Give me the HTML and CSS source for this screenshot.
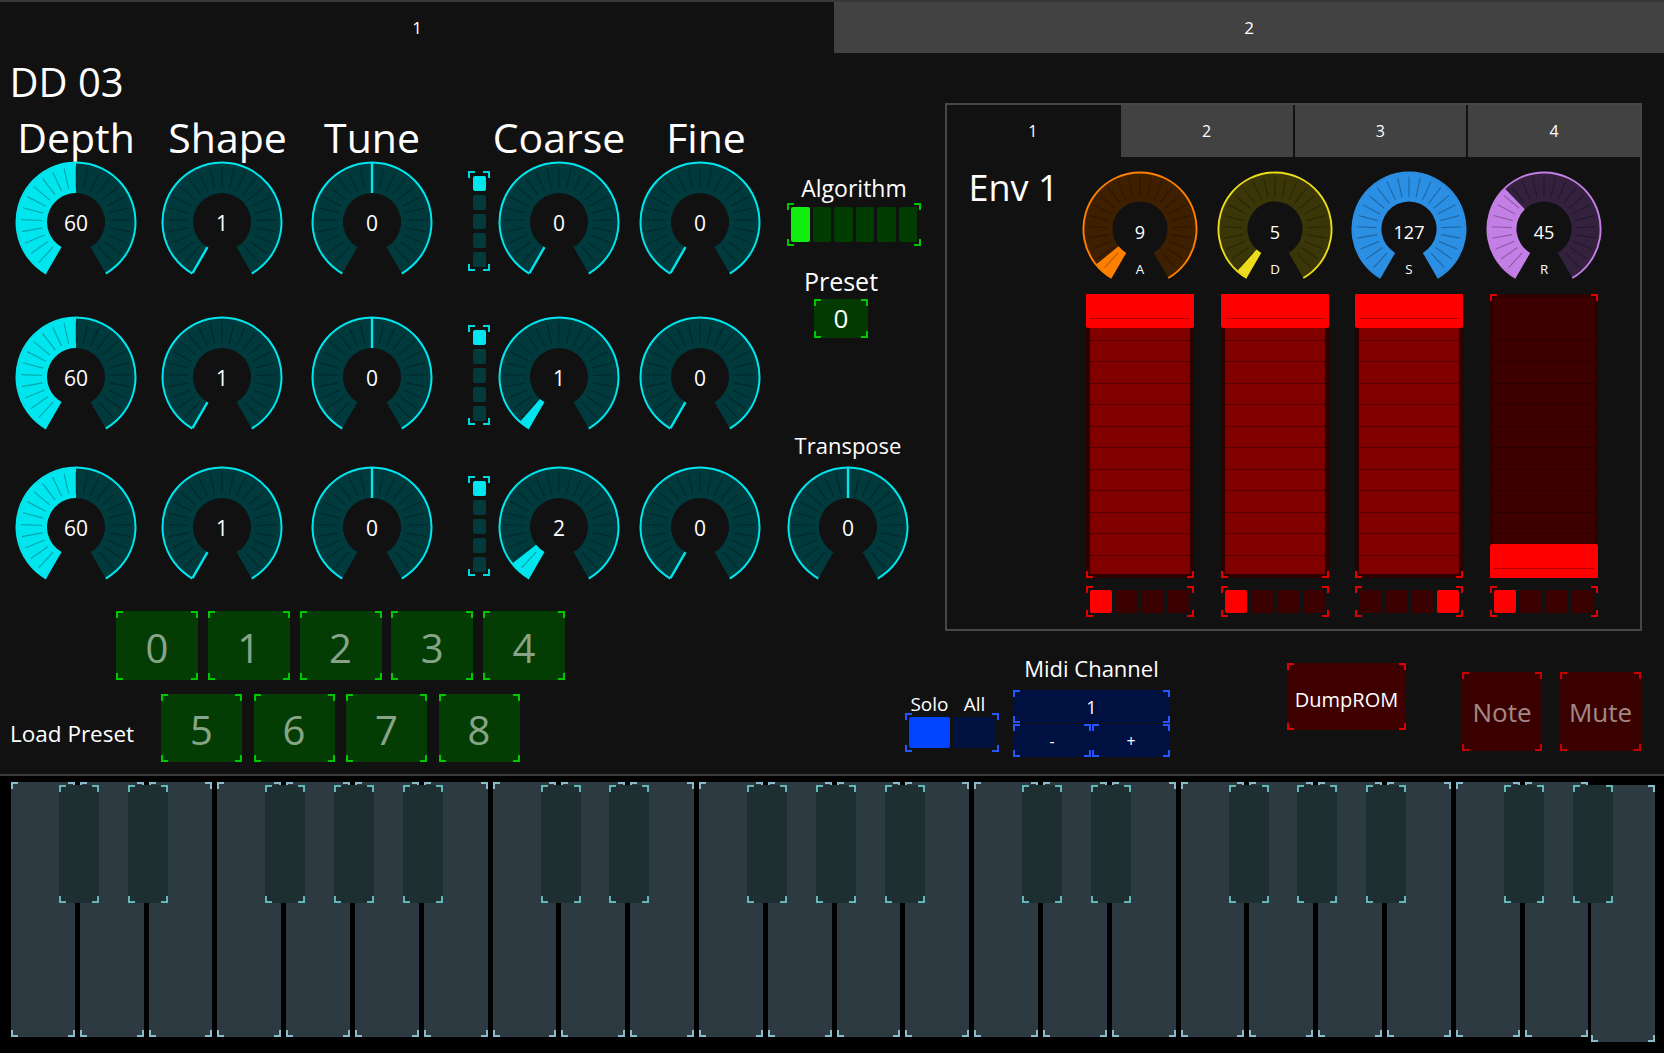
FILE: index.html
```html
<!DOCTYPE html>
<html>
<head>
<meta charset="utf-8">
<title>DD 03</title>
<link rel="stylesheet" href="styles.css">
</head>
<body>
<svg class="defs" aria-hidden="true">
  <defs>
    <path id="k-arc" d="M-29.5 51.1A59 59 0 1 1 29.5 51.1L14.5 25.11A29 29 0 1 0 -14.5 25.11Z"/>
    <path id="k-ring" fill="none" d="M-29.75 51.53A59.5 59.5 0 1 1 29.75 51.53"/>
    <path id="k-half" d="M-29.5 51.1A59 59 0 0 1 0 -59L0 -29A29 29 0 0 0 -14.5 25.11Z"/>
    <path id="k-w1" d="M-29.5 51.1A59 59 0 0 1 -38.71 44.53L-19.03 21.89A29 29 0 0 0 -14.5 25.11Z"/>
    <path id="k-w2" d="M-29.5 51.1A59 59 0 0 1 -46.49 36.33L-22.85 17.86A29 29 0 0 0 -14.5 25.11Z"/>
    <path id="k-wa" d="M-29.5 51.1A59 59 0 0 1 -45.85 37.13L-22.54 18.25A29 29 0 0 0 -14.5 25.11Z"/>
    <path id="k-wd" d="M-29.5 51.1A59 59 0 0 1 -39.48 43.84L-19.4 21.55A29 29 0 0 0 -14.5 25.11Z"/>
    <path id="k-wr" d="M-29.5 51.1A59 59 0 0 1 -40.99 -42.44L-20.15 -20.86A29 29 0 0 0 -14.5 25.11Z"/>
    <path id="k-min" d="M-14.5 25.11L-29.5 51.1"/>
    <path id="k-mid" d="M0 -29V-59"/>
    <path id="k-ticks" d="M0 -34V-55 M7.36 -33.19L11.9 -53.7 M-7.36 -33.19L-11.9 -53.7 M14.37 -30.81L23.24 -49.85 M-14.37 -30.81L-23.24 -49.85 M20.7 -26.97L33.48 -43.63 M-20.7 -26.97L-33.48 -43.63 M26.05 -21.85L42.13 -35.35 M-26.05 -21.85L-42.13 -35.35 M30.16 -15.7L48.79 -25.4 M-30.16 -15.7L-48.79 -25.4 M32.84 -8.8L53.13 -14.24 M-32.84 -8.8L-53.13 -14.24 M33.97 -1.48L54.95 -2.4 M-33.97 -1.48L-54.95 -2.4 M33.48 5.9L54.16 9.55 M-33.48 5.9L-54.16 9.55 M31.41 13.01L50.81 21.05 M-31.41 13.01L-50.81 21.05 M27.85 19.5L45.05 31.55 M-27.85 19.5L-45.05 31.55 M22.97 25.07L37.16 40.55 M-22.97 25.07L-37.16 40.55"/>
  </defs>
</svg>

<div class="tabs">
  <div class="tab">1</div>
  <div class="tab off">2</div>
</div>

<div class="page">
  <div class="left">
    <div class="title">DD 03</div>

    <div class="knobs">
      <div class="kcol">
        <div class="klabel">Depth</div>
        <svg class="knob m1" viewBox="-61 -61 122 122"><use href="#k-arc" class="kd"/><use href="#k-half" class="kc"/><use href="#k-ticks" class="kt"/><use href="#k-ring" class="kr"/><text class="kv" y="1">60</text></svg>
        <svg class="knob m2" viewBox="-61 -61 122 122"><use href="#k-arc" class="kd"/><use href="#k-half" class="kc"/><use href="#k-ticks" class="kt"/><use href="#k-ring" class="kr"/><text class="kv" y="1">60</text></svg>
        <svg class="knob m3" viewBox="-61 -61 122 122"><use href="#k-arc" class="kd"/><use href="#k-half" class="kc"/><use href="#k-ticks" class="kt"/><use href="#k-ring" class="kr"/><text class="kv" y="1">60</text></svg>
      </div>
      <div class="kcol c2">
        <div class="klabel sh">Shape</div>
        <svg class="knob m1" viewBox="-61 -61 122 122"><use href="#k-arc" class="kd"/><use href="#k-ticks" class="kt"/><use href="#k-ring" class="kr"/><use href="#k-min" class="kl"/><text class="kv" y="1">1</text></svg>
        <svg class="knob m2" viewBox="-61 -61 122 122"><use href="#k-arc" class="kd"/><use href="#k-ticks" class="kt"/><use href="#k-ring" class="kr"/><use href="#k-min" class="kl"/><text class="kv" y="1">1</text></svg>
        <svg class="knob m3" viewBox="-61 -61 122 122"><use href="#k-arc" class="kd"/><use href="#k-ticks" class="kt"/><use href="#k-ring" class="kr"/><use href="#k-min" class="kl"/><text class="kv" y="1">1</text></svg>
      </div>
      <div class="kcol c3">
        <div class="klabel">Tune</div>
        <svg class="knob m1" viewBox="-61 -61 122 122"><use href="#k-arc" class="kd"/><use href="#k-ticks" class="kt"/><use href="#k-ring" class="kr"/><use href="#k-mid" class="kl"/><text class="kv" y="1">0</text></svg>
        <svg class="knob m2" viewBox="-61 -61 122 122"><use href="#k-arc" class="kd"/><use href="#k-ticks" class="kt"/><use href="#k-ring" class="kr"/><use href="#k-mid" class="kl"/><text class="kv" y="1">0</text></svg>
        <svg class="knob m3" viewBox="-61 -61 122 122"><use href="#k-arc" class="kd"/><use href="#k-ticks" class="kt"/><use href="#k-ring" class="kr"/><use href="#k-mid" class="kl"/><text class="kv" y="1">0</text></svg>
      </div>
      <div class="swcol">
        <div class="vsw br bc-cyan"><i class="on"></i><i></i><i></i><i></i><i></i></div>
        <div class="vsw br bc-cyan s2"><i class="on"></i><i></i><i></i><i></i><i></i></div>
        <div class="vsw br bc-cyan s3"><i class="on"></i><i></i><i></i><i></i><i></i></div>
      </div>
      <div class="kcol c5">
        <div class="klabel">Coarse</div>
        <svg class="knob m1" viewBox="-61 -61 122 122"><use href="#k-arc" class="kd"/><use href="#k-ticks" class="kt"/><use href="#k-ring" class="kr"/><use href="#k-min" class="kl"/><text class="kv" y="1">0</text></svg>
        <svg class="knob m2" viewBox="-61 -61 122 122"><use href="#k-arc" class="kd"/><use href="#k-w1" class="kc"/><use href="#k-ticks" class="kt"/><use href="#k-ring" class="kr"/><text class="kv" y="1">1</text></svg>
        <svg class="knob m3" viewBox="-61 -61 122 122"><use href="#k-arc" class="kd"/><use href="#k-w2" class="kc"/><use href="#k-ticks" class="kt"/><use href="#k-ring" class="kr"/><text class="kv" y="1">2</text></svg>
      </div>
      <div class="kcol c6">
        <div class="klabel fi">Fine</div>
        <svg class="knob m1" viewBox="-61 -61 122 122"><use href="#k-arc" class="kd"/><use href="#k-ticks" class="kt"/><use href="#k-ring" class="kr"/><use href="#k-min" class="kl"/><text class="kv" y="1">0</text></svg>
        <svg class="knob m2" viewBox="-61 -61 122 122"><use href="#k-arc" class="kd"/><use href="#k-ticks" class="kt"/><use href="#k-ring" class="kr"/><use href="#k-min" class="kl"/><text class="kv" y="1">0</text></svg>
        <svg class="knob m3" viewBox="-61 -61 122 122"><use href="#k-arc" class="kd"/><use href="#k-ticks" class="kt"/><use href="#k-ring" class="kr"/><use href="#k-min" class="kl"/><text class="kv" y="1">0</text></svg>
      </div>
      <div class="rcol">
        <div class="alg-label">Algorithm</div>
        <div class="alg br bc-green"><i class="on"></i><i></i><i></i><i></i><i></i><i></i></div>
        <div class="preset">
          <div class="preset-label">Preset</div>
          <div class="preset-box br bc-green">0</div>
        </div>
        <div class="transpose">
          <div class="tr-label">Transpose</div>
          <svg class="knob tr-knob" viewBox="-61 -61 122 122"><use href="#k-arc" class="kd"/><use href="#k-ticks" class="kt"/><use href="#k-ring" class="kr"/><use href="#k-mid" class="kl"/><text class="kv" y="1">0</text></svg>
        </div>
      </div>
    </div>

    <div class="prow r1">
      <div class="pbtn br bc-green">0</div>
      <div class="pbtn br bc-green">1</div>
      <div class="pbtn br bc-green">2</div>
      <div class="pbtn br bc-green">3</div>
      <div class="pbtn br bc-green">4</div>
    </div>
    <div class="prow r2">
      <div class="lp">Load Preset</div>
      <div class="pbtn br bc-green">5</div>
      <div class="pbtn br bc-green">6</div>
      <div class="pbtn br bc-green">7</div>
      <div class="pbtn br bc-green">8</div>
    </div>
  </div>

  <div class="right">
    <div class="panel">
      <div class="ptabs">
        <div class="ptab on">1</div>
        <div class="ptab">2</div>
        <div class="ptab">3</div>
        <div class="ptab">4</div>
      </div>
      <div class="pbody">
        <div class="envl">Env 1</div>
        <div class="ecol">
          <svg class="eknob ea" viewBox="-61 -61 122 122"><use href="#k-arc" class="kd"/><use href="#k-wa" class="kc"/><use href="#k-ticks" class="kt"/><use href="#k-ring" class="kr"/><text class="ev" y="3">9</text><text class="el" y="42">A</text></svg>
          <div class="fader br bc-red"><div class="track"></div><div class="handle"></div></div>
          <div class="hsw br bc-red"><i class="on"></i><i></i><i></i><i></i></div>
        </div>
        <div class="ecol">
          <svg class="eknob ed" viewBox="-61 -61 122 122"><use href="#k-arc" class="kd"/><use href="#k-wd" class="kc"/><use href="#k-ticks" class="kt"/><use href="#k-ring" class="kr"/><text class="ev" y="3">5</text><text class="el" y="42">D</text></svg>
          <div class="fader br bc-red"><div class="track"></div><div class="handle"></div></div>
          <div class="hsw br bc-red"><i class="on"></i><i></i><i></i><i></i></div>
        </div>
        <div class="ecol">
          <svg class="eknob es" viewBox="-61 -61 122 122"><use href="#k-arc" class="kc"/><use href="#k-ticks" class="kt"/><use href="#k-ring" class="kr"/><text class="ev" y="3">127</text><text class="el" y="42">S</text></svg>
          <div class="fader br bc-red"><div class="track"></div><div class="handle"></div></div>
          <div class="hsw br bc-red"><i></i><i></i><i></i><i class="on"></i></div>
        </div>
        <div class="ecol">
          <svg class="eknob er" viewBox="-61 -61 122 122"><use href="#k-arc" class="kd"/><use href="#k-wr" class="kc"/><use href="#k-ticks" class="kt"/><use href="#k-ring" class="kr"/><text class="ev" y="3">45</text><text class="el" y="42">R</text></svg>
          <div class="fader off br bc-red"><div class="track"></div><div class="handle low"></div></div>
          <div class="hsw br bc-red"><i class="on"></i><i></i><i></i><i></i></div>
        </div>
      </div>
    </div>

    <div class="controls">
      <div class="solo">
        <div class="solo-labels"><span>Solo</span><span>All</span></div>
        <div class="sw2 br bc-blue"><i class="on"></i><i></i></div>
      </div>
      <div class="midi">
        <div class="midi-label">Midi Channel</div>
        <div class="mtop br bc-blue">1</div>
        <div class="mbot">
          <div class="br bc-blue">-</div>
          <div class="br bc-blue">+</div>
        </div>
      </div>
      <div class="dump br bc-red">DumpROM</div>
      <div class="note br bc-red2">Note</div>
      <div class="mute br bc-red2">Mute</div>
    </div>
  </div>
</div>

<div class="sep"></div>

<div class="keyboard">
  <div class="keys">
    <div class="wk br"><div class="bk br"></div></div>
    <div class="wk br"><div class="bk br"></div></div>
    <div class="wk br"></div>
    <div class="wk br"><div class="bk br"></div></div>
    <div class="wk br"><div class="bk br"></div></div>
    <div class="wk br"><div class="bk br"></div></div>
    <div class="wk br"></div>

    <div class="wk br"><div class="bk br"></div></div>
    <div class="wk br"><div class="bk br"></div></div>
    <div class="wk br"></div>
    <div class="wk br"><div class="bk br"></div></div>
    <div class="wk br"><div class="bk br"></div></div>
    <div class="wk br"><div class="bk br"></div></div>
    <div class="wk br"></div>

    <div class="wk br"><div class="bk br"></div></div>
    <div class="wk br"><div class="bk br"></div></div>
    <div class="wk br"></div>
    <div class="wk br"><div class="bk br"></div></div>
    <div class="wk br"><div class="bk br"></div></div>
    <div class="wk br"><div class="bk br"></div></div>
    <div class="wk br"></div>

    <div class="wk br"><div class="bk br"></div></div>
    <div class="wk br"><div class="bk br"></div></div>
    <div class="wk br last"></div>
  </div>
</div>
</body>
</html>
```

FILE: styles.css
```css
* { box-sizing: border-box; }
html, body { margin: 0; padding: 0; }
body {
  width: 1664px;
  height: 1053px;
  overflow: hidden;
  background: #111111;
  color: #ffffff;
  font-family: "Open Sans", "Noto Sans", sans-serif;
}
.defs { position: absolute; width: 0; height: 0; overflow: hidden; }

/* corner brackets */
.br { position: relative; }
.br::after {
  content: "";
  position: absolute;
  inset: 0;
  pointer-events: none;
  z-index: 1;
  background:
    linear-gradient(var(--bc), var(--bc)) left top / 7px 2px no-repeat,
    linear-gradient(var(--bc), var(--bc)) left top / 2px 7px no-repeat,
    linear-gradient(var(--bc), var(--bc)) right top / 7px 2px no-repeat,
    linear-gradient(var(--bc), var(--bc)) right top / 2px 7px no-repeat,
    linear-gradient(var(--bc), var(--bc)) left bottom / 7px 2px no-repeat,
    linear-gradient(var(--bc), var(--bc)) left bottom / 2px 7px no-repeat,
    linear-gradient(var(--bc), var(--bc)) right bottom / 7px 2px no-repeat,
    linear-gradient(var(--bc), var(--bc)) right bottom / 2px 7px no-repeat;
}
.bc-cyan { --bc: #00d8e0; }
.bc-green { --bc: #00c800; }
.bc-red { --bc: #e00000; }
.bc-red2 { --bc: #c80000; }
.bc-blue { --bc: #2457ff; }

/* top tabs */
.tabs { display: flex; height: 53px; border-top: 2px solid #383838; }
.tab {
  width: 834px;
  flex: none;
  display: flex;
  align-items: center;
  justify-content: center;
  font-size: 17px;
  background: #111111;
}
.tab.off { flex: 1; width: auto; background: #424242; }

.page { display: flex; height: 721px; }
.left { width: 900px; flex: none; }
.right { flex: 1; }

.title {
  margin-top: 6.5px;
  padding-left: 9.5px;
  font-size: 40px;
  line-height: 44px;
  height: 44px;
}

/* knobs grid */
.knobs { display: flex; margin-top: 11.5px; padding-left: 15px; align-items: flex-start; }
.kcol { width: 122px; flex: none; display: flex; flex-direction: column; align-items: center; }
.c2 { margin-left: 24px; }
.c3 { margin-left: 28px; }
.c5 { margin-left: 8px; }
.c6 { margin-left: 19px; }
.klabel { font-size: 41px; line-height: 44px; height: 44px; white-space: nowrap; }
.klabel.sh { margin-left: 11px; }
.klabel.fi { margin-left: 12px; }

.knob { width: 122px; height: 122px; display: block; flex: none; --c: #00e6ee; --d: #013a3c; }
.knob.m1 { margin-top: 2px; }
.knob.m2 { margin-top: 33px; }
.knob.m3 { margin-top: 28px; }
.kd { fill: var(--d); }
.kc { fill: var(--c); }
.kt { stroke: rgba(0, 0, 0, 0.28); stroke-width: 1.2; fill: none; }
.kr { stroke: var(--c); stroke-width: 2; fill: none; }
.kl { stroke: var(--c); stroke-width: 2.4; fill: none; }
.kv {
  fill: #ffffff;
  font-family: "Open Sans", "Noto Sans", sans-serif;
  font-size: 21px;
  text-anchor: middle;
  dominant-baseline: central;
}

/* vertical selector switches */
.swcol { width: 22px; flex: none; margin-left: 35px; padding-top: 56px; }
.vsw {
  width: 22px;
  height: 100px;
  padding: 4.5px;
  display: flex;
  flex-direction: column;
  gap: 4px;
}
.vsw.s2 { margin-top: 54px; }
.vsw.s3 { margin-top: 51px; }
.vsw i { flex: 1; background: #013a3c; border-radius: 2px; }
.vsw i.on { background: #00e6ee; }

/* right column: algorithm / preset / transpose */
.rcol { width: 134px; flex: none; margin-left: 26px; display: flex; flex-direction: column; align-items: flex-start; }
.alg-label {
  width: 134px;
  text-align: center;
  margin-top: 60.4px;
  font-size: 23px;
  line-height: 26px;
  height: 26px;
}
.alg {
  margin-top: 1.6px;
  width: 134px;
  height: 43px;
  padding: 4px;
  display: flex;
  gap: 3px;
}
.alg i { flex: 1; background: #013d01; border-radius: 2px; }
.alg i.on { background: #10ee10; }

.preset { width: 108px; display: flex; flex-direction: column; align-items: center; }
.preset-label { margin-top: 21px; font-size: 25px; line-height: 28px; height: 28px; }
.preset-box {
  margin-top: 4px;
  width: 54px;
  height: 39px;
  background: #023a02;
  display: flex;
  align-items: center;
  justify-content: center;
  font-size: 26px;
}

.transpose { width: 122px; display: flex; flex-direction: column; align-items: center; }
.tr-label { margin-top: 93.8px; font-size: 22px; line-height: 26px; height: 26px; }
.tr-knob { margin-top: 8.2px; }

/* preset buttons */
.prow { display: flex; align-items: flex-start; }
.prow.r1 { margin-top: 23px; padding-left: 116px; gap: 9.75px; }
.prow.r2 { margin-top: 14px; padding-left: 10px; gap: 11.5px; }
.pbtn {
  width: 82px;
  height: 69px;
  flex: none;
  padding-top: 3px;
  background: #033d03;
  display: flex;
  align-items: center;
  justify-content: center;
  font-size: 40px;
  color: rgba(255, 255, 255, 0.55);
}
.prow.r2 .pbtn { width: 81px; height: 68px; }
.lp {
  width: 151px;
  flex: none;
  margin-right: -11.5px;
  margin-top: 27px;
  font-size: 22.5px;
  line-height: 26px;
  white-space: nowrap;
}

/* env panel */
.panel {
  margin: 50px 0 0 45px;
  width: 697px;
  height: 528px;
  border: 2px solid #474747;
  display: flex;
  flex-direction: column;
}
.ptabs { display: flex; gap: 2px; height: 52px; flex: none; }
.ptab {
  flex: 1;
  background: #424242;
  display: flex;
  align-items: center;
  justify-content: center;
  font-size: 16px;
}
.ptab.on { background: #111111; }
.pbody { display: flex; align-items: flex-start; }
.envl {
  width: 126px;
  flex: none;
  padding-left: 21.5px;
  margin-top: 11px;
  font-size: 36px;
  line-height: 40px;
  height: 40px;
}
.ecol { width: 134.5px; flex: none; display: flex; flex-direction: column; align-items: center; }

.eknob { width: 116px; height: 116px; display: block; margin-top: 14px; }
.ea { --c: #ff8000; --d: #3e2000; }
.ed { --c: #ecdc1c; --d: #3a3608; }
.es { --c: #2b8fe4; --d: #0c2a44; }
.er { --c: #c47fe6; --d: #33213e; }
.ev {
  fill: #ffffff;
  font-family: "Open Sans", "Noto Sans", sans-serif;
  font-size: 19px;
  text-anchor: middle;
  dominant-baseline: central;
}
.el {
  fill: #ffffff;
  font-family: "Open Sans", "Noto Sans", sans-serif;
  font-size: 14px;
  text-anchor: middle;
  dominant-baseline: central;
}

.fader {
  margin-top: 7px;
  width: 108px;
  height: 284px;
  padding: 4px;
  background: #2c0000;
}
.track {
  height: 100%;
  background: repeating-linear-gradient(to bottom, #800000 0 20.5px, #560000 20.5px 21.5px);
}
.fader.off .track {
  background: repeating-linear-gradient(to bottom, #3c0000 0 20.5px, #2a0000 20.5px 21.5px);
}
.fader.off { background: #300000; }
.handle {
  position: absolute;
  left: 0;
  right: 0;
  top: 0;
  height: 34px;
  background: #ff0000;
  border-radius: 2px;
  z-index: 2;
}
.handle::before {
  content: "";
  position: absolute;
  left: 4px;
  right: 4px;
  top: 24px;
  height: 1px;
  background: #b00000;
}
.handle.low { top: auto; bottom: 0; }

.hsw {
  margin-top: 8px;
  width: 108px;
  height: 31px;
  padding: 4px;
  display: flex;
  gap: 4px;
}
.hsw i { flex: 1; background: #3a0000; border-radius: 2px; }
.hsw i.on { background: #ff0000; }

/* bottom controls */
.controls { display: flex; align-items: flex-start; }
.solo { margin: 64px 0 0 5px; width: 94px; flex: none; }
.solo-labels { display: flex; gap: 4px; padding: 0 4px; height: 18px; font-size: 19px; line-height: 18px; }
.solo-labels span { flex: 1; text-align: center; }
.sw2 { height: 39px; padding: 4px; display: flex; gap: 4px; }
.sw2 i { flex: 1; background: #00113f; border-radius: 2px; }
.sw2 i.on { background: #0044ff; }

.midi { margin: 23.5px 0 0 14px; width: 157px; flex: none; }
.midi-label { font-size: 22px; line-height: 26px; height: 26px; text-align: center; white-space: nowrap; }
.mtop {
  margin-top: 9.5px;
  height: 33px;
  background: #001141;
  display: flex;
  align-items: center;
  justify-content: center;
  font-size: 18px;
}
.mbot { display: flex; gap: 1px; margin-top: 1px; }
.mbot div {
  flex: 1;
  height: 33px;
  background: #001141;
  display: flex;
  align-items: center;
  justify-content: center;
  font-size: 16px;
}

.dump {
  margin: 32px 0 0 117px;
  width: 119px;
  height: 67px;
  flex: none;
  padding-top: 5px;
  background: #3f0000;
  display: flex;
  align-items: center;
  justify-content: center;
  font-size: 20px;
}
.note, .mute {
  margin-top: 41px;
  height: 79px;
  flex: none;
  background: #3a0000;
  display: flex;
  align-items: center;
  justify-content: center;
  font-size: 26px;
  color: rgba(255, 255, 255, 0.55);
}
.note { margin-left: 56px; width: 80px; }
.mute { margin-left: 18px; width: 81px; }

/* keyboard */
.sep { height: 2px; background: #3b3b3b; }
.keyboard { height: 277px; background: #000000; padding: 6px 0 0 11px; }
.keys { display: flex; gap: 5px; width: 1644px; height: 255px; }
.wk { flex: 1; background: #2e3a41; --bc: #88bccb; }
.wk.last { margin-top: 3px; height: 257px; margin-left: -2px; }
.bk {
  position: absolute;
  left: 48px;
  top: 3px;
  width: 40px;
  height: 118px;
  background: #1d2f30;
  z-index: 2;
  --bc: #62b6b6;
}
```
